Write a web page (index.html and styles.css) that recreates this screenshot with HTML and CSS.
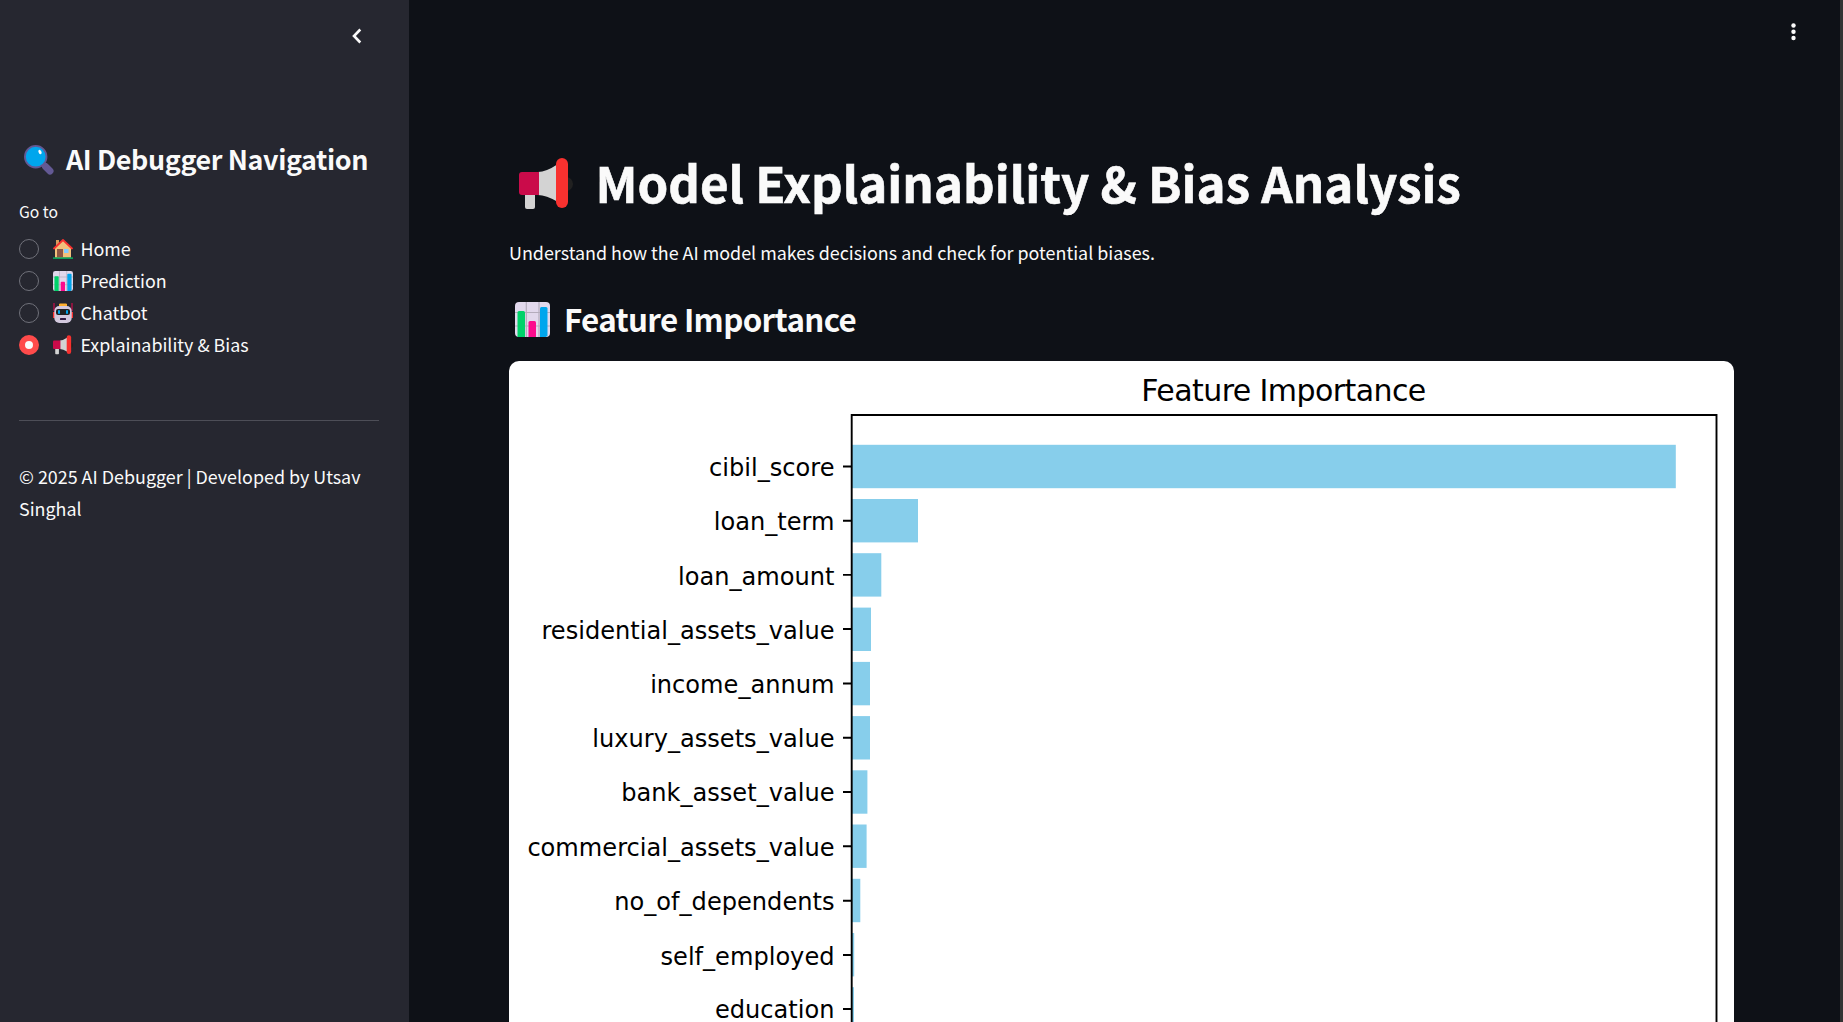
FILE: index.html
```html
<!DOCTYPE html>
<html lang="en">
<head>
<meta charset="utf-8">
<title>AI Debugger</title>
<link rel="stylesheet" href="styles.css">
</head>
<body>
<svg class="defs" aria-hidden="true">
  <symbol id="megaphone" viewBox="0 0 54 52">
    <circle cx="47" cy="26" r="7" fill="#212121"/>
    <path d="M6 36h10v13a2 2 0 0 1-2 2H8a2 2 0 0 1-2-2z" fill="#d3d3d3"/>
    <path d="M19 14q8 0 20-8v38q-12-7-20-7z" fill="#d3d3d3"/>
    <path d="M3 14h17v23H3a3 3 0 0 1-3-3V17a3 3 0 0 1 3-3z" fill="#ca0b4a"/>
    <rect x="37" y="0" width="12" height="50" rx="6" fill="#f8312f"/>
  </symbol>
  <symbol id="bars" viewBox="0 0 35 35">
    <rect width="35" height="35" rx="4" fill="#e1d8ec"/>
    <path d="M11.3 0v35M24 0v35M0 10.500h35M0 24h35" stroke="#b4acbc" stroke-width="1.200"/>
    <path d="M2.500 35V10.500A1.500 1.500 0 0 1 4 9h4.500a1.500 1.500 0 0 1 1.500 1.500V35z" fill="#00d26a"/>
    <path d="M13.500 35V20.500A1.500 1.500 0 0 1 15 19h4.500a1.500 1.500 0 0 1 1.500 1.500V35z" fill="#fc0b8d"/>
    <path d="M25 35V6.500A1.500 1.500 0 0 1 26.500 5H31a1.500 1.500 0 0 1 1.500 1.500V33.500L31 35z" fill="#00a6ed"/>
  </symbol>
  <symbol id="house" viewBox="0 0 20 20">
    <path d="M3 1h3v8H3z" fill="#d69b5c"/>
    <path d="M2 9l8-8 8 8v9.500H2z" fill="#f3c07b"/>
    <path d="M4 10h6v8.500H4z" fill="#8c5543"/>
    <path d="M11 10h4.500v4H11z" fill="#83cbff"/>
    <path d="M1 9.500L10 1l9 8.500" fill="none" stroke="#f8312f" stroke-width="1.800" stroke-linecap="round" stroke-linejoin="round"/>
    <path d="M0 18.500h20v1.200H0z" fill="#00d26a"/>
  </symbol>
  <symbol id="robot" viewBox="0 0 20 20">
    <path d="M1 0v8M19 0v8" stroke="#ca0b4a" stroke-width="1.200"/>
    <path d="M0 9h2v6H0zM18 9h2v6h-2z" fill="#f8312f"/>
    <path d="M6.500 1h7v3h-7z" fill="#ffb02e" stroke="#ffb02e" stroke-linejoin="round"/>
    <rect x="1.300" y="3" width="17.400" height="17" rx="5" fill="#d3c9de"/>
    <rect x="3" y="6" width="14" height="6" rx="2" fill="#212121"/>
    <rect x="5" y="7" width="2" height="4" rx="1" fill="#00a6ed"/>
    <rect x="13" y="7" width="2" height="4" rx="1" fill="#00a6ed"/>
    <rect x="7" y="15" width="6" height="2" rx=".5" fill="#321b41"/>
  </symbol>
  <symbol id="lens" viewBox="0 0 30 30">
    <path d="M18 18l8 8" stroke="#635994" stroke-width="3"/>
    <path d="M21.500 21.500l4.500 4.500" stroke="#635994" stroke-width="7" stroke-linecap="round"/>
    <circle cx="11.700" cy="11.700" r="10.800" fill="#00a6ed" stroke="#635994" stroke-width="1.800"/>
    <ellipse cx="16" cy="7" rx="1.400" ry="2.300" transform="rotate(-28 16 7)" fill="#fff"/>
  </symbol>
</svg>
<div class="app">
  <aside class="sidebar">
    <div class="sidebar-head">
      <svg class="chevron" viewBox="0 0 10 16"><path d="M8.300 1.500L2 8l6.300 6.500" fill="none" stroke="#fafafa" stroke-width="2.600"/></svg>
    </div>
    <h2 class="nav-title"><svg class="lens"><use href="#lens"/></svg><span>AI Debugger Navigation</span></h2>
    <div class="nav-label">Go to</div>
    <ul class="nav">
      <li><i class="radio"></i><svg class="emoji"><use href="#house"/></svg><span>Home</span></li>
      <li><i class="radio"></i><svg class="emoji"><use href="#bars"/></svg><span>Prediction</span></li>
      <li><i class="radio"></i><svg class="emoji"><use href="#robot"/></svg><span>Chatbot</span></li>
      <li><i class="radio checked"></i><svg class="emoji"><use href="#megaphone"/></svg><span>Explainability &amp; Bias</span></li>
    </ul>
    <hr class="rule">
    <p class="copyright">© 2025 AI Debugger | Developed by Utsav Singhal</p>
  </aside>
  <main class="main">
    <header class="toolbar">
      <svg class="kebab" viewBox="0 0 5 18" fill="#fafafa"><circle cx="2.500" cy="2.500" r="2.200"/><circle cx="2.500" cy="8.700" r="2.200"/><circle cx="2.500" cy="15" r="2.200"/></svg>
    </header>
    <h1 class="title"><svg class="megaphone"><use href="#megaphone"/></svg><span>Model Explainability &amp; Bias Analysis</span></h1>
    <p class="intro">Understand how the AI model makes decisions and check for potential biases.</p>
    <h2 class="section"><svg class="bars"><use href="#bars"/></svg><span>Feature Importance</span></h2>
    <figure class="figure">
      <svg class="chart" viewBox="509 361 1225 661">
        <text class="chart-title" x="1141.300" y="400.700" textLength="285">Feature Importance</text>
        <g fill="#87ceeb">
          <rect x="852" y="444.800" width="823.800" height="43.400"/>
          <rect x="852" y="499" width="66" height="43.400"/>
          <rect x="852" y="553.200" width="29.300" height="43.400"/>
          <rect x="852" y="607.600" width="19" height="43.400"/>
          <rect x="852" y="661.900" width="18" height="43.400"/>
          <rect x="852" y="716.100" width="18" height="43.400"/>
          <rect x="852" y="770.300" width="15.400" height="43.400"/>
          <rect x="852" y="824.500" width="14.600" height="43.400"/>
          <rect x="852" y="878.800" width="8.300" height="43.400"/>
          <rect x="852" y="933" width="2.200" height="43.400"/>
          <rect x="852" y="987.200" width="2" height="43.400"/>
        </g>
        <path d="M851.700 1030V415H1716.500V1030M843 466.500h9M843 520.700h9M843 574.900h9M843 629h9M843 683.500h9M843 737.800h9M843 792h9M843 846.200h9M843 900.700h9M843 955h9M843 1009h9" fill="none" stroke="#000" stroke-width="1.900"/>
        <g class="ticks">
          <text x="834.500" y="475.700">cibil_score</text>
          <text x="834.500" y="529.800">loan_term</text>
          <text x="834.500" y="584.700">loan_amount</text>
          <text x="834.500" y="638.900">residential_assets_value</text>
          <text x="834.500" y="693">income_annum</text>
          <text x="834.500" y="747.300">luxury_assets_value</text>
          <text x="834.500" y="801.300">bank_asset_value</text>
          <text x="834.500" y="856">commercial_assets_value</text>
          <text x="834.500" y="910.300">no_of_dependents</text>
          <text x="834.500" y="964.700">self_employed</text>
          <text x="834.500" y="1018">education</text>
        </g>
      </svg>
    </figure>
  </main>
  <div class="scroll-edge"></div>
</div>
</body>
</html>
```
FILE: styles.css
```css
* { box-sizing: border-box; margin: 0; padding: 0; }
body {
  background: #0e1117;
  color: #fafafa;
  font: 17.9px/32px "Noto Sans CJK SC", "Noto Sans", sans-serif;
  overflow: hidden;
}
span, .intro, .nav-label { white-space: nowrap; }
.defs { display: none; }
.app { display: flex; width: 1843px; height: 1022px; overflow: hidden; }

.sidebar { width: 409px; flex: none; background: #262730; padding: 0 30px 0 19px; }
.sidebar-head { height: 142px; padding: 28px 17px 0 0; display: flex; justify-content: flex-end; align-items: flex-start; }
.chevron { width: 10px; height: 16px; }
.nav-title { display: flex; align-items: center; height: 36px; padding-left: 5px; font-size: 26.9px; line-height: 36px; font-weight: 700; letter-spacing: -0.39px; }
.nav-title span { padding-bottom: 2px; }
.lens { width: 30px; height: 30px; margin-right: 12px; }
.nav-label { margin-top: 21px; height: 34px; line-height: 26px; font-size: 15.7px; }
.nav { list-style: none; }
.nav li { display: flex; align-items: center; height: 32px; }
.nav span { padding-bottom: 2px; }
.radio { width: 20px; height: 20px; border: 1px solid #70717a; border-radius: 50%; margin-right: 14px; }
.radio.checked { border: 6px solid #ff4b4b; background: #fafafa; }
.emoji { width: 20px; height: 20px; margin-right: 7.4px; }
.rule { border: 0; border-top: 1px solid #4d4e57; margin: 59px 0 39px; }

.main { flex: 1; padding: 0 106px 0 100px; display: flex; flex-direction: column; }
.toolbar { height: 150px; flex: none; display: flex; justify-content: flex-end; padding-top: 23px; margin-right: -62px; }
.kebab { width: 5px; height: 18px; }
.title { display: flex; height: 66px; padding-left: 10px; font-size: 49.2px; line-height: 64px; font-weight: 700; letter-spacing: 0.03px; -webkit-text-stroke: 0.6px #fafafa; }
.megaphone { width: 54px; height: 52px; margin: 8px 22.5px 0 0; }
.intro { margin-top: 20px; height: 32px; }
.section { display: flex; margin-top: 30px; height: 63px; padding-left: 6px; font-size: 31.3px; line-height: 42px; font-weight: 700; letter-spacing: -0.64px; }
.bars { width: 35px; height: 35px; margin: 4px 14px 0 0; }
.figure { flex: none; height: 661px; background: #fff; border-radius: 10px 10px 0 0; }
.chart { display: block; width: 1225px; height: 661px; }
.chart text { font-family: "DejaVu Sans", sans-serif; fill: #000; }
.chart .chart-title { font-size: 30px; }
.ticks text { font-size: 24.1px; text-anchor: end; }
.scroll-edge { width: 3px; background: #333; }
```
